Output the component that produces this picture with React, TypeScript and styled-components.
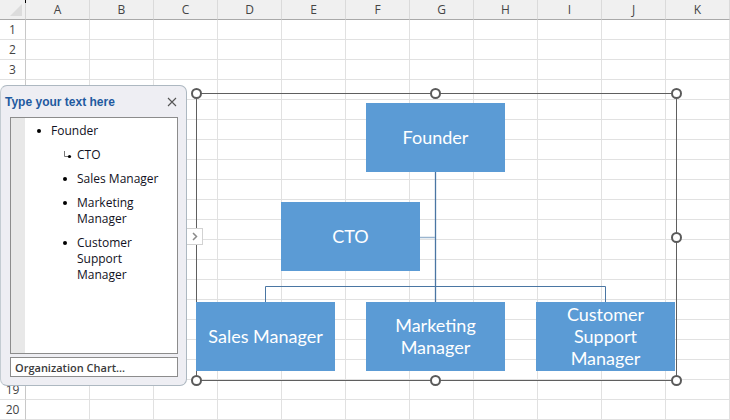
import React from 'react';
import styled, { createGlobalStyle } from 'styled-components';

const GlobalStyle = createGlobalStyle`
  html, body {
    margin: 0;
    padding: 0;
    background: #fff;
    overflow: hidden;
  }
`;

const COLS = ['A', 'B', 'C', 'D', 'E', 'F', 'G', 'H', 'I', 'J', 'K'];
const ROWS = Array.from({ length: 20 }, (_, i) => i + 1);

const Page = styled.div`
  position: relative;
  width: 730px;
  height: 420px;
  overflow: hidden;
  font-family: 'Open Sans', 'Noto Sans', sans-serif;
`;

const Sheet = styled.div`
  display: grid;
  grid-template-columns: 26px repeat(11, 64px);
  grid-auto-rows: 20px;
`;

const Corner = styled.div`
  position: relative;
  background: #f0f0f0;
  border-bottom: 1px solid #a9a9a9;
  border-right: 1px solid #d4d4d4;

  &::before {
    content: '';
    position: absolute;
    right: 3px;
    bottom: 3px;
    border-style: solid;
    border-width: 0 0 12px 12px;
    border-color: transparent transparent #dcdcdc transparent;
  }

  &::after {
    content: '';
    position: absolute;
    right: -1px;
    top: 0;
    width: 1px;
    height: 3px;
    background: #000;
  }
`;

const ColHead = styled.div`
  display: flex;
  align-items: center;
  justify-content: center;
  background: #f0f0f0;
  border-bottom: 1px solid #a9a9a9;
  border-right: 1px solid #dadada;
  color: #444;
  font-size: 12px;
`;

const RowHead = styled.div`
  display: flex;
  align-items: center;
  justify-content: center;
  background: #fff;
  border-bottom: 1px solid #e1e1e1;
  border-right: 1px solid #c8c8c8;
  color: #444;
  font-size: 12px;
`;

const Cell = styled.div`
  border-bottom: 1px solid #e1e1e1;
  border-right: 1px solid #e1e1e1;
`;

/* ---- SmartArt object ---- */

const Frame = styled.div`
  position: absolute;
  left: 196px;
  top: 93px;
  width: 479px;
  height: 286px;
  border: 1px solid #5f5f5f;
`;

const Connectors = styled.svg`
  position: absolute;
  left: -1px;
  top: -1px;
  overflow: visible;
`;

const Node = styled.div<{ $x: number; $y: number }>`
  position: absolute;
  left: ${(p) => p.$x - 1}px;
  top: ${(p) => p.$y - 1}px;
  width: 139px;
  height: 69px;
  display: flex;
  align-items: center;
  justify-content: center;
  text-align: center;
  background: #5b9bd5;
  color: #fff;
  font-family: Lato, 'Open Sans', sans-serif;
  font-size: 18px;
  line-height: 22px;
  padding: 0 6px 2px;
  box-sizing: border-box;
`;

const Handle = styled.div<{ $x: number; $y: number }>`
  position: absolute;
  left: ${(p) => p.$x - 5}px;
  top: ${(p) => p.$y - 5}px;
  width: 7px;
  height: 7px;
  border: 2px solid #5a5a5a;
  border-radius: 50%;
  background: #fff;
`;

/* ---- Text pane ---- */

const Pane = styled.div`
  position: absolute;
  left: 0;
  top: 85px;
  width: 187px;
  height: 301px;
  box-sizing: border-box;
  border: 1px solid #adb8c1;
  border-left-color: #c4ccd2;
  border-radius: 7px;
  background: #eeeef3;
  display: flex;
  flex-direction: column;
  padding: 0 8px 8px 9px;
`;

const PaneTitle = styled.div`
  height: 31px;
  display: flex;
  align-items: center;
  justify-content: space-between;
  margin-left: -5px;
  padding-right: 1px;
  color: #1f5aa0;
  font-family: 'Liberation Sans', Arial, sans-serif;
  font-weight: bold;
  font-size: 12px;
`;

const CloseIcon = () => (
  <svg width="10" height="10" viewBox="0 0 10 10">
    <path d="M1 1 L9 9 M9 1 L1 9" stroke="#555" strokeWidth="1.1" fill="none" />
  </svg>
);

const Editor = styled.div`
  height: 237px;
  box-sizing: border-box;
  border: 1px solid #8c8c8c;
  background: #fff;
  display: flex;
`;

const Gutter = styled.div`
  width: 14px;
  background: #e8e8e8;
`;

const List = styled.ul`
  list-style: none;
  margin: 0;
  padding: 5px 0 0 0;
  flex: 1;
  display: flex;
  flex-direction: column;
  gap: 8px;
  font-size: 12px;
  line-height: 16px;
  color: #111122;
`;

const Item = styled.li<{ $level: number }>`
  display: flex;
  margin-left: ${(p) => (p.$level === 1 ? 11 : 37)}px;
  padding-right: 8px;
`;

const Marker = styled.span`
  flex: 0 0 15px;
  height: 16px;
  position: relative;
`;

const Dot = styled.span`
  position: absolute;
  left: 1px;
  top: 6px;
  width: 4px;
  height: 4px;
  border-radius: 50%;
  background: #000;
`;

const Branch = styled.svg`
  position: absolute;
  left: 1px;
  top: 4px;
`;

const Footer = styled.div`
  margin-top: 3px;
  height: 20px;
  box-sizing: border-box;
  border: 1px solid #8c8c8c;
  background: #fff;
  display: flex;
  align-items: center;
  padding-left: 4px;
  color: #3a3a3a;
  font-size: 11px;
  font-weight: 600;
`;

const Toggle = styled.div`
  position: absolute;
  left: 187px;
  top: 228px;
  width: 16px;
  height: 17px;
  box-sizing: border-box;
  border: 1px solid #d2d2d2;
  border-left: none;
  background: #fff;
  display: flex;
  align-items: center;
  justify-content: center;
`;

type Entry = { text: string; level: number; branch?: boolean };

const entries: Entry[] = [
  { text: 'Founder', level: 1 },
  { text: 'CTO', level: 2, branch: true },
  { text: 'Sales Manager', level: 2 },
  { text: 'Marketing Manager', level: 2 },
  { text: 'Customer Support Manager', level: 2 },
];

const nodes = [
  { label: 'Founder', x: 170, y: 10 },
  { label: 'CTO', x: 85, y: 109 },
  { label: 'Sales Manager', x: 0, y: 209 },
  { label: 'Marketing Manager', x: 170, y: 209 },
  { label: 'Customer Support Manager', x: 340, y: 209 },
];

const handles = [
  [196, 93], [435, 93], [676, 93],
  [676, 237],
  [196, 380], [435, 380], [676, 380],
];

const App = () => {
  return (
    <Page>
      <GlobalStyle />
      <Sheet>
        <Corner />
        {COLS.map((c) => (
          <ColHead key={c}>{c}</ColHead>
        ))}
        {ROWS.map((r) => (
          <React.Fragment key={r}>
            <RowHead>{r}</RowHead>
            {COLS.map((c) => (
              <Cell key={c} />
            ))}
          </React.Fragment>
        ))}
      </Sheet>

      <Frame>
        <Connectors width="481" height="288">
          <path d="M239.5 79 V209" stroke="#4a76a3" strokeWidth="1.3" fill="none" />
          <path d="M69.5 209 V193.5 H409.5 V209" stroke="#4a76a3" strokeWidth="1" fill="none" />
          <path d="M224 144.5 H239" stroke="#9bb5cf" strokeWidth="1.5" fill="none" />
        </Connectors>
        {nodes.map((n) => (
          <Node key={n.label} $x={n.x} $y={n.y}>
            {n.label}
          </Node>
        ))}
      </Frame>
      {handles.map(([x, y]) => (
        <Handle key={`${x}-${y}`} $x={x} $y={y} />
      ))}

      <Pane>
        <PaneTitle>
          <span>Type your text here</span>
          <CloseIcon />
        </PaneTitle>
        <Editor>
          <Gutter />
          <List>
            {entries.map((e) => (
              <Item key={e.text} $level={e.level}>
                <Marker>
                  {e.branch ? (
                    <Branch width="9" height="8" viewBox="0 0 9 8">
                      <path d="M1.5 0 V5.5 H6" stroke="#777" strokeWidth="1" fill="none" />
                      <circle cx="6.5" cy="5.5" r="1.6" fill="#000" />
                    </Branch>
                  ) : (
                    <Dot />
                  )}
                </Marker>
                <span>{e.text}</span>
              </Item>
            ))}
          </List>
        </Editor>
        <Footer>Organization Chart...</Footer>
      </Pane>
      <Toggle>
        <svg width="6" height="9" viewBox="0 0 6 9">
          <path d="M1 1 L4.5 4.5 L1 8" stroke="#8a8a8a" strokeWidth="1.5" fill="none" />
        </svg>
      </Toggle>
    </Page>
  );
};

export default App;
